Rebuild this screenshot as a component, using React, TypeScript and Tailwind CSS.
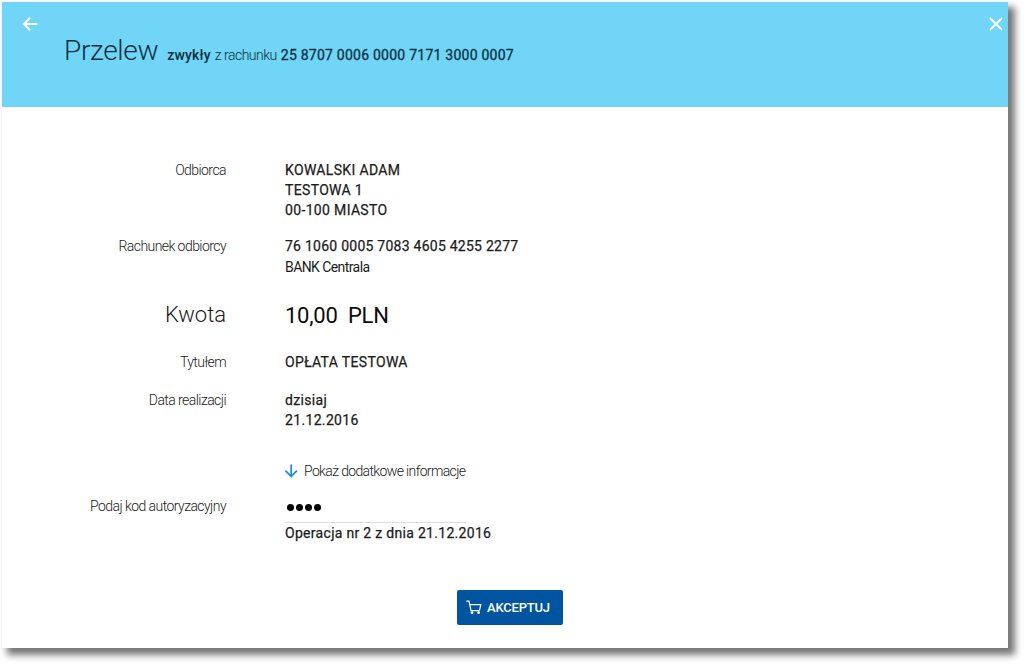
import React from "react";
import clsx from "clsx";

interface RowProps {
    label?: string,
    className?: string,
    labelClassName?: string,
    children: React.ReactNode
}

const Row = ({label, className, labelClassName, children}: RowProps) => {
    return (
        <div className={clsx("flex", className)}>
            <div className={clsx("w-[224px] shrink-0 text-right font-light", labelClassName ?? "text-sm/5 tracking-[-0.56px]")}>
                {label}
            </div>
            <div className="ml-[59px] font-normal tracking-[0.34px] text-[#1c1c1c] [-webkit-text-stroke:0.25px]">{children}</div>
        </div>
    )
}

const ArrowLeft = () => (
    <svg className="h-[14px] w-4" viewBox="0 0 16 14" fill="none" stroke="currentColor" strokeWidth="2">
        <path d="M8 0.8 1.8 7 8 13.2M2 7H15.5"/>
    </svg>
)

const ArrowDown = () => (
    <svg className="h-[14px] w-[13px]" viewBox="0 0 13 14" fill="none" stroke="currentColor" strokeWidth="1.8">
        <path d="M6.2 0.5V12.5M0.4 6.6 6.2 12.4 12 6.6"/>
    </svg>
)

const Close = () => (
    <svg className="h-[14px] w-[14px]" viewBox="0 0 14 14" fill="none" stroke="currentColor" strokeWidth="1.8">
        <path d="M1 1 13 13M13 1 1 13"/>
    </svg>
)

const Cart = () => (
    <svg className="h-[15px] w-4" viewBox="0 0 16 15" fill="none" stroke="currentColor" strokeWidth="1.2">
        <path d="M0.3 1.2H3L5 10.6H13.4M3.8 4.6H14.8L13.4 10.6"/>
        <circle cx="6" cy="12.7" r="1.4" fill="currentColor" stroke="none"/>
        <circle cx="12.6" cy="12.7" r="1.4" fill="currentColor" stroke="none"/>
    </svg>
)

const App = () => {
    return (
        <div className="h-[664px] w-[1024px] overflow-hidden bg-white pl-0.5 pt-0.5 font-['Roboto','Noto_Sans',sans-serif] text-[#1a1a1a]">
            <div className="flex h-[646px] w-[1006px] flex-col bg-white shadow-[6px_6px_7px_1px_#777]">
                <header className="flex h-[105px] shrink-0 items-start justify-between bg-[#71d5f7] text-[#0c3040]">
                    <button className="ml-5 mt-[15px] text-white" aria-label="Wstecz"><ArrowLeft/></button>
                    <div className="ml-[26px] mt-[33px] flex grow items-baseline">
                        <h1 className="text-[28px] font-light leading-8 tracking-[-0.3px]">Przelew</h1>
                        <p className="ml-[9px] flex items-baseline gap-1 text-sm font-medium">
                            <span className="tracking-[0.15px]">zwykły</span>
                            <span className="font-light tracking-[-0.5px]">z rachunku</span>
                            <span className="font-normal tracking-[0.24px] [-webkit-text-stroke:0.3px]">25 8707 0006 0000 7171 3000 0007</span>
                        </p>
                    </div>
                    <button className="mr-[5px] mt-[15px] text-white" aria-label="Zamknij"><Close/></button>
                </header>
                <main className="flex flex-col pt-[53px] text-sm leading-5">
                    <Row label="Odbiorca">
                        <p>KOWALSKI ADAM</p>
                        <p>TESTOWA 1</p>
                        <p>00-100 MIASTO</p>
                    </Row>
                    <Row label="Rachunek odbiorcy" className="mt-4">
                        <p className="tracking-[0.25px]">76 1060 0005 7083 4605 4255 2277</p>
                        <p className="mt-px tracking-[-0.58px] [-webkit-text-stroke:0]">BANK Centrala</p>
                    </Row>
                    <Row label="Kwota" className="mt-[22px] leading-8" labelClassName="text-[22px]">
                        <p className="mt-px whitespace-pre text-[22px] tracking-[-0.25px] text-[#0c0c0c] [-webkit-text-stroke:0]">10,00  PLN</p>
                    </Row>
                    <Row label="Tytułem" className="mt-5">
                        <p>OPŁATA TESTOWA</p>
                    </Row>
                    <Row label="Data realizacji" className="mt-[18px]">
                        <p>dzisiaj</p>
                        <p>21.12.2016</p>
                    </Row>
                    <Row className="mt-[31px]">
                        <a className="flex items-center gap-[6px] font-light tracking-[-0.64px] text-[#1a1a1a] [-webkit-text-stroke:0]">
                            <span className="text-[#2490cf]"><ArrowDown/></span>
                            <span>Pokaż dodatkowe informacje</span>
                        </a>
                    </Row>
                    <Row label="Podaj kod autoryzacyjny" className="mt-[15px]">
                        <div className="flex h-[27px] w-[181px] items-start gap-[2px] border-b border-[#ddd] pl-[2px] pt-2">
                            {
                                [0, 1, 2, 3].map((dot) => (
                                    <span key={dot} className="size-[7px] rounded-full bg-black"/>
                                ))
                            }
                        </div>
                        <p className="tracking-[0.3px]">Operacja nr 2 z dnia 21.12.2016</p>
                    </Row>
                    <button className="ml-[455px] mt-[47px] flex h-[35px] w-[106px] items-center rounded-[2px] bg-[#0054a0] pl-[9px] text-white">
                        <Cart/>
                        <span className="ml-[5px] text-[13px] font-medium tracking-[-0.2px]">AKCEPTUJ</span>
                    </button>
                </main>
            </div>
        </div>
    )
}

export default App
